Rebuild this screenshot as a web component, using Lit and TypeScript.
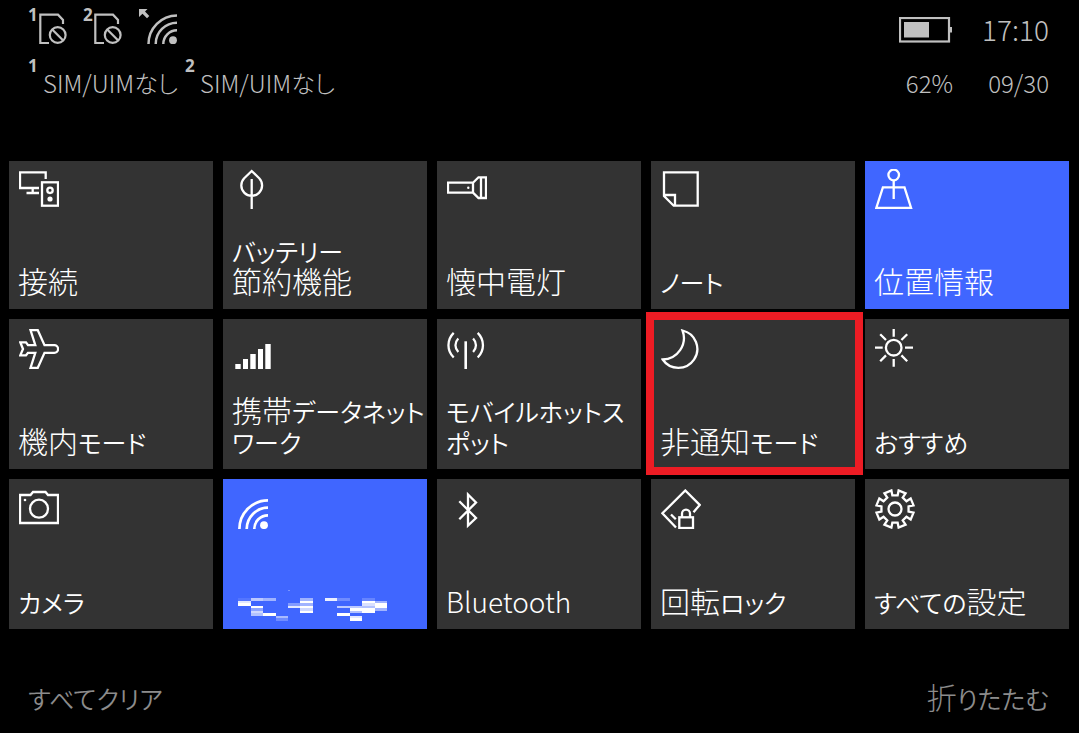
import { LitElement, html, svg, css, nothing } from "lit";
import { customElement, property } from "lit/decorators.js";
import { classMap } from "lit/directives/class-map.js";

const gearPath = (): string => {
  const points: string[] = [];
  const at = (radius: number, deg: number) => {
    const a = (deg * Math.PI) / 180;
    points.push(`${(20 + radius * Math.sin(a)).toFixed(2)} ${(20 - radius * Math.cos(a)).toFixed(2)}`);
  };
  for (let tooth = 0; tooth < 8; tooth++) {
    const notch = tooth * 45;
    at(18.9, notch - 11);
    at(13.8, notch - 11);
    at(13.8, notch + 11);
    at(18.9, notch + 11);
  }
  return `M${points.join("L")}Z`;
};

const icons = {
  connect: svg`<path d="M26.7 10V3.3H1V19H20M13.7 19V24M7.5 24H20"/><rect x="23" y="13.3" width="16" height="23.4"/><circle cx="31" cy="21.3" r="2.7"/><circle class="solid" cx="31" cy="30" r="2.6"/>`,
  leaf: svg`<path d="M18.7 2L11.2 9.2A10.4 10.4 0 1 0 26.2 9.2ZM18.7 10V40"/>`,
  torch: svg`<path d="M1 13.7H26V23.7H1ZM26 13.7L31.5 8.3H39V29H31.5L26 23.7M34 8.3V29"/><circle class="solid" cx="21.3" cy="18.7" r="1.2"/>`,
  note: svg`<path d="M3 27V3.3H36.7V36.7H12.7ZM3 26H14V36.5"/>`,
  location: svg`<circle cx="18.7" cy="6" r="5.3"/><path d="M18.7 11.5V30M7.9 18.3H29.5L36.1 39H1.3Z"/>`,
  plane: svg`<path d="M11.5 1H18.7L25.5 16.2H35.3A3.8 3.8 0 0 1 35.3 23.8H25.5L18.7 39H11.5L16.3 23.8H9L7 26.3H1.3L4 20L1.3 13.3H7L9 16.2H16.3Z"/>`,
  signal: svg`<path class="solid" d="M2.3 35H7.7V40H2.3ZM10 30H15V40H10ZM17.3 25H22.7V40H17.3ZM25 20H30V40H25ZM32.3 15H37.7V40H32.3Z"/>`,
  hotspot: svg`<path d="M18.7 12.3V40" stroke-width="2.6"/><path d="M6.7 3.9C-.3 10.9 -.3 21.5 6.7 28.5M11.3 9.5C7.5 13.5 7.5 19 11.3 23M30.7 3.9C37.7 10.9 37.7 21.5 30.7 28.5M26.1 9.5C29.9 13.5 29.9 19 26.1 23"/>`,
  moon: svg`<path d="M21.5 1.5A18.9 18.9 0 1 1 1.7 30.5A21.5 21.5 0 0 0 21.5 1.5Z"/>`,
  sun: svg`<circle cx="18.7" cy="18.7" r="7.8"/><path d="M18.7 0V7.7M18.7 30V37.7M0 18.7H7.7M30 18.7H38M5.2 5.2L11 11M26.4 26.4L32.2 32.2M5.2 32.2L11 26.4M26.4 11L32.2 5.2"/>`,
  camera: svg`<path d="M1 6H11.5L14 3H26.5L29 6H39V34H1Z"/><circle cx="20" cy="19.7" r="9"/><circle class="solid" cx="6" cy="11" r="1.3"/>`,
  wifi: svg`<path d="M6.4 40A28.6 28.6 0 0 1 35 11.4M13.7 40A21.3 21.3 0 0 1 35 18.7M21.3 40A13.7 13.7 0 0 1 35 26.3" stroke-width="2.7"/><circle class="solid" cx="31" cy="36.2" r="3.9"/>`,
  bluetooth: svg`<path d="M12.3 12.3L29 29L21 36.5V5.5L29 13.5L12.3 30.2"/>`,
  rotation: svg`<path d="M32.5 23.2L38.7 15.9L24.3 1.5L1.4 24.3L15 38.5M10 25.5L14.8 30.3"/><rect x="18.3" y="28.3" width="13.7" height="10.7"/><path d="M21 28V24.6A4 4 0 0 1 29 24.6V28"/>`,
  gear: svg`<path d=${gearPath()}/><circle cx="20" cy="20" r="6.5"/>`,
};

type IconName = keyof typeof icons;

interface Action {
  icon: IconName;
  label: string;
  on?: boolean;
  marked?: boolean;
  masked?: boolean;
}

const actions: Action[] = [
  { icon: "connect", label: "接続" },
  { icon: "leaf", label: "バッテリー\n節約機能" },
  { icon: "torch", label: "懐中電灯" },
  { icon: "note", label: "ノート" },
  { icon: "location", label: "位置情報", on: true },
  { icon: "plane", label: "機内モード" },
  { icon: "signal", label: "携帯データネット\nワーク" },
  { icon: "hotspot", label: "モバイルホットス\nポット" },
  { icon: "moon", label: "非通知モード", marked: true },
  { icon: "sun", label: "おすすめ" },
  { icon: "camera", label: "カメラ" },
  { icon: "wifi", label: "Wi-Fi", on: true, masked: true },
  { icon: "bluetooth", label: "Bluetooth" },
  { icon: "rotation", label: "回転ロック" },
  { icon: "gear", label: "すべての設定" },
];

/* Kana are set smaller than kanji, Latin in between. */
const script = (text: string) =>
  text
    .split(/([\u3040-\u30ff]+|[A-Za-z]+)/)
    .filter(Boolean)
    .map((run) =>
      /^[\u3040-\u30ff]/.test(run)
        ? html`<span class="kana">${run}</span>`
        : /^[A-Za-z]/.test(run)
          ? html`<span class="latin">${run}</span>`
          : run,
    );

const scriptStyles = css`
  .kana { font-size: 25px; font-weight: 350; line-height: 1; }
  .latin { font-size: 28px; line-height: 1; }
`;

/* Mosaic blocks over the network name: x, y, width, height, opacity. */
const mosaic: number[][] = [
  [50, 0, 2, 1, 0.3],
  [0, 8, 13, 3, 0.1], [13, 8, 12, 3, 0.65], [25, 8, 13, 3, 0.5],
  [0, 11, 13, 2, 0.85], [0, 13, 13, 3, 1],
  [13, 16, 12, 2, 1], [13, 18, 12, 3, 0.4], [13, 21, 12, 2, 0.75], [13, 23, 12, 3, 0.6],
  [25, 23, 13, 3, 1], [38, 26, 12, 2, 0.55], [38, 28, 12, 3, 0.25],
  [50, 13, 12, 3, 0.35], [50, 16, 12, 2, 0.85],
  [62, 8, 13, 3, 0.5], [62, 11, 13, 2, 1], [62, 13, 13, 3, 0.5], [62, 16, 13, 2, 1], [62, 18, 13, 3, 0.75], [62, 21, 13, 2, 1],
  [87, 8, 12, 3, 0.9], [99, 8, 13, 3, 0.25],
  [99, 16, 25, 2, 0.65], [112, 18, 12, 3, 1], [112, 21, 12, 2, 0.6], [99, 23, 13, 3, 1], [112, 26, 12, 2, 0.85], [112, 28, 12, 3, 1],
  [124, 8, 13, 3, 0.2], [124, 11, 13, 2, 1], [124, 13, 13, 3, 0.8], [124, 16, 13, 2, 0.6], [124, 18, 13, 5, 1],
  [137, 11, 12, 2, 0.5], [137, 13, 12, 5, 1], [137, 18, 12, 3, 0.5],
];

@customElement("action-tile")
export class ActionTile extends LitElement {
  @property({ attribute: false }) action!: Action;

  static styles = [
    scriptStyles,
    css`
      :host { display: grid; min-width: 0; }
      .tile {
        position: relative;
        display: flex;
        flex-direction: column;
        align-items: flex-start;
        justify-content: space-between;
        min-width: 0;
        margin: 0;
        padding: 10px 0 13px 10px;
        border: 0;
        background: #333;
        color: #fff;
        font: inherit;
        line-height: 31px;
        text-align: left;
      }
      :host(:nth-child(-n + 5)) .tile { padding-top: 8px; }
      .on { background: #4066ff; }
      .marked::after {
        content: "";
        position: absolute;
        inset: -7px -8px -6px -5px;
        border: 8px solid #ed1c24;
        pointer-events: none;
      }
      .icon {
        width: 40px;
        height: 40px;
        fill: none;
        stroke: currentColor;
        stroke-width: 2.3;
      }
      .solid { fill: currentColor; stroke: none; }
      .label { margin-left: -1px; white-space: pre; }
      .mosaic { width: 149px; height: 31px; margin: 0 0 -5px 5px; fill: currentColor; }
      @media (max-width: 900px) {
        .label { white-space: normal; }
      }
    `,
  ];

  render() {
    const { icon, label, on, marked, masked } = this.action;
    return html`
      <button
        type="button"
        class=${classMap({ tile: true, on: !!on, marked: !!marked })}
        aria-pressed=${on ? "true" : "false"}
        aria-label=${masked ? label : nothing}
      >
        <svg class="icon" viewBox="0 0 40 40" aria-hidden="true">${icons[icon]}</svg>
        ${masked
          ? html`<svg class="mosaic" viewBox="0 0 149 31" shape-rendering="crispEdges" aria-hidden="true">
              ${mosaic.map(([x, y, w, h, o]) => svg`<rect x=${x} y=${y} width=${w} height=${h} opacity=${o}/>`)}
            </svg>`
          : html`<span class="label">${script(label)}</span>`}
      </button>
    `;
  }
}

@customElement("status-bar")
export class StatusBar extends LitElement {
  static styles = css`
    :host { display: block; color: #c0c0c0; }
    .bar {
      display: grid;
      grid-template-columns: 1fr auto;
      padding: 9px 30px 0 28px;
    }
    .icons, .sims, .sim, .item { display: flex; align-items: flex-start; }
    .icons { height: 51px; }
    .item { width: 55px; }
    .slot {
      flex: none;
      width: 11px;
      font: 700 17px/12px "Open Sans", sans-serif;
    }
    .card { width: 28px; height: 36px; }
    .glyph { fill: none; stroke: currentColor; stroke-width: 2.2; }
    .solid { fill: currentColor; stroke: none; }
    .sims { height: 50px; font-size: 24px; line-height: 46px; }
    .sim { width: 157px; }
    .name { margin-left: 4px; white-space: nowrap; }
    .readout {
      display: grid;
      grid-template-columns: auto auto;
      grid-template-rows: 51px 50px;
      column-gap: 29px;
      justify-items: end;
    }
    .battery { width: 54px; height: 26px; margin-top: 8px; }
    .clock { font-size: 28px; line-height: 40px; }
    .small { font-size: 24px; line-height: 46px; }
  `;

  private card(slot: number) {
    return html`
      <div class="item">
        <span class="slot">${slot}</span>
        <svg class="glyph card" viewBox="0 0 28 36" aria-hidden="true">
          <path d="M10 34H1.3V5.7H19L24 11V15"/>
          <circle cx="18.7" cy="26" r="7.9"/>
          <path d="M13.2 20.5L24.2 31.5"/>
        </svg>
      </div>`;
  }

  private sim(slot: number) {
    return html`<div class="sim"><span class="slot">${slot}</span><span class="name">SIM/UIMなし</span></div>`;
  }

  render() {
    return html`
      <header class="bar">
        <div>
          <div class="icons">
            ${this.card(1)}${this.card(2)}
            <svg class="glyph" width="40" height="40" viewBox="-1 5 40 40" aria-hidden="true">
              <path d="M9.5 40A28.6 28.6 0 0 1 38 11.4M16.7 40A21.3 21.3 0 0 1 38 18.7M24.3 40A13.7 13.7 0 0 1 38 26.3" stroke-width="2.5"/>
              <circle class="solid" cx="34" cy="36.2" r="3.9"/>
              <path class="solid" d="M0 5H8.5L6 7.5L10.3 12L8 14.3L3.500 9.8L0 13Z"/>
            </svg>
          </div>
          <div class="sims">${this.sim(1)}${this.sim(2)}</div>
        </div>
        <div class="readout">
          <svg class="glyph battery" viewBox="0 0 54 26" role="img" aria-label="62%">
            <rect x="1" y="1" width="49" height="23.5"/>
            <path class="solid" d="M5 5H30V20.5H5ZM50 10H53V15.5H50Z"/>
          </svg>
          <time class="clock">17:10</time>
          <span class="small">62%</span>
          <time class="small">09/30</time>
        </div>
      </header>
    `;
  }
}

@customElement("app-root")
export class AppRoot extends LitElement {
  static styles = [
    scriptStyles,
    css`
      :host {
        display: flex;
        flex-direction: column;
        box-sizing: border-box;
        min-height: 100vh;
        background: #000;
        font-family: "Noto Sans CJK JP", sans-serif;
        font-size: 30px;
        font-weight: 300;
        font-feature-settings: "palt";
      }
      .tiles {
        display: grid;
        grid-template-columns: repeat(5, minmax(0, 1fr));
        grid-template-rows: 148px;
        grid-auto-rows: 150px;
        gap: 10px;
        padding: 51px 10px 0 9px;
      }
      .footer {
        display: flex;
        justify-content: space-between;
        padding: 47px 30px 0 28px;
      }
      .link {
        margin: 0;
        padding: 0;
        border: 0;
        background: none;
        color: #8c8c8c;
        font: inherit;
        line-height: 40px;
      }
    `,
  ];

  render() {
    return html`
      <status-bar></status-bar>
      <main class="tiles">
        ${actions.map((action) => html`<action-tile .action=${action}></action-tile>`)}
      </main>
      <footer class="footer">
        <button type="button" class="link">${script("すべてクリア")}</button>
        <button type="button" class="link">${script("折りたたむ")}</button>
      </footer>
    `;
  }
}
